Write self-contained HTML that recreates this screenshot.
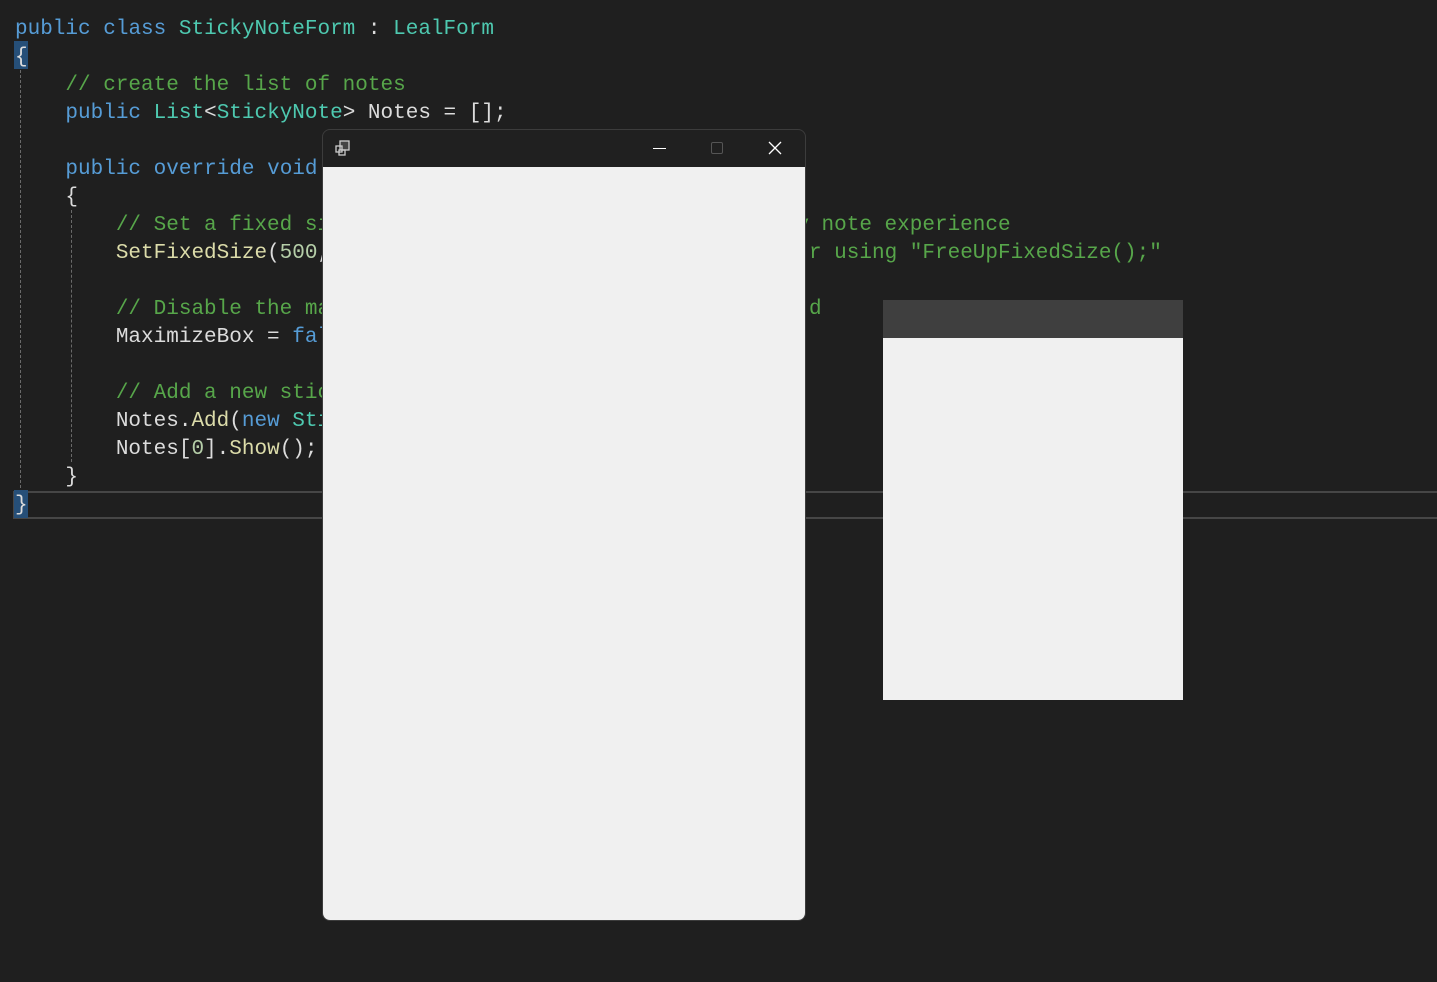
<!DOCTYPE html>
<html><head><meta charset="utf-8"><style>
html,body{margin:0;padding:0;background:#1f1f1f;width:1437px;height:982px;overflow:hidden;position:relative}
pre{margin:0;position:absolute;left:15px;top:16px;font:21px/28px "Liberation Mono",monospace;color:#dcdcdc;white-space:pre}
.k{color:#569cd6}.t{color:#4ec9b0}.c{color:#57a64a}.m{color:#dcdcaa}.n{color:#b5cea8}
.g{position:absolute;width:0;border-left:1px dashed #6a6a6a}
.cur{position:absolute;left:13px;top:491px;right:-5px;height:24px;border:2px solid #464646}
.br{position:absolute;width:14px;height:28px;background:#264f78}
</style></head><body>
<div class="br" style="left:14px;top:41px"></div>
<div class="cur"></div>
<div class="br" style="left:14px;top:490px"></div>
<div class="g" style="left:20px;top:70px;height:418px"></div>
<div class="g" style="left:71px;top:210px;height:252px"></div>
<pre><span class="k">public</span> <span class="k">class</span> <span class="t">StickyNoteForm</span> : <span class="t">LealForm</span>
{
    <span class="c">// create the list of notes</span>
    <span class="k">public</span> <span class="t">List</span>&lt;<span class="t">StickyNote</span>&gt; Notes = [];

    <span class="k">public</span> <span class="k">override</span> <span class="k">void</span>
    {
        <span class="c">// Set a fixed si                                     y note experience</span>
        <span class="m">SetFixedSize</span>(<span class="n">500</span>,                                      <span class="c">r using "FreeUpFixedSize();"</span>

        <span class="c">// Disable the ma                                      d</span>
        MaximizeBox = <span class="k">fal</span>

        <span class="c">// Add a new stic</span>
        Notes.<span class="m">Add</span>(<span class="k">new</span> <span class="t">Sti</span>
        Notes[<span class="n">0</span>].<span class="m">Show</span>();
    }
}</pre>
<div style="position:absolute;left:883px;top:300px;width:300px;height:38px;background:#3f3f3f"></div>
<div style="position:absolute;left:883px;top:338px;width:300px;height:362px;background:#f0f0f0"></div>
<div style="position:absolute;left:322px;top:129px;width:482px;height:790px;border:1px solid #3c3c3c;border-radius:8px;background:#202020;overflow:hidden">
  <div style="position:absolute;left:0;top:37px;right:0;bottom:0;background:#f0f0f0"></div>
  <svg style="position:absolute;left:10px;top:9px" width="20" height="20" viewBox="0 0 20 20">
    <rect x="7" y="2" width="9" height="9" fill="#444" stroke="#ccc" stroke-width="1.3"/>
    <rect x="3" y="7" width="6" height="6" fill="none" stroke="#ccc" stroke-width="1.3"/>
    <rect x="6" y="11" width="6" height="5" fill="none" stroke="#ccc" stroke-width="1.3"/>
  </svg>
  <div style="position:absolute;left:330px;top:18px;width:13px;height:1px;background:#fff"></div>
  <div style="position:absolute;left:388px;top:12px;width:10px;height:10px;border:1px solid #555;border-radius:2px"></div>
  <svg style="position:absolute;left:445px;top:11px" width="14" height="14" viewBox="0 0 14 14"><path d="M1 1L13 13M13 1L1 13" stroke="#fff" stroke-width="1.3"/></svg>
</div>
</body></html>
